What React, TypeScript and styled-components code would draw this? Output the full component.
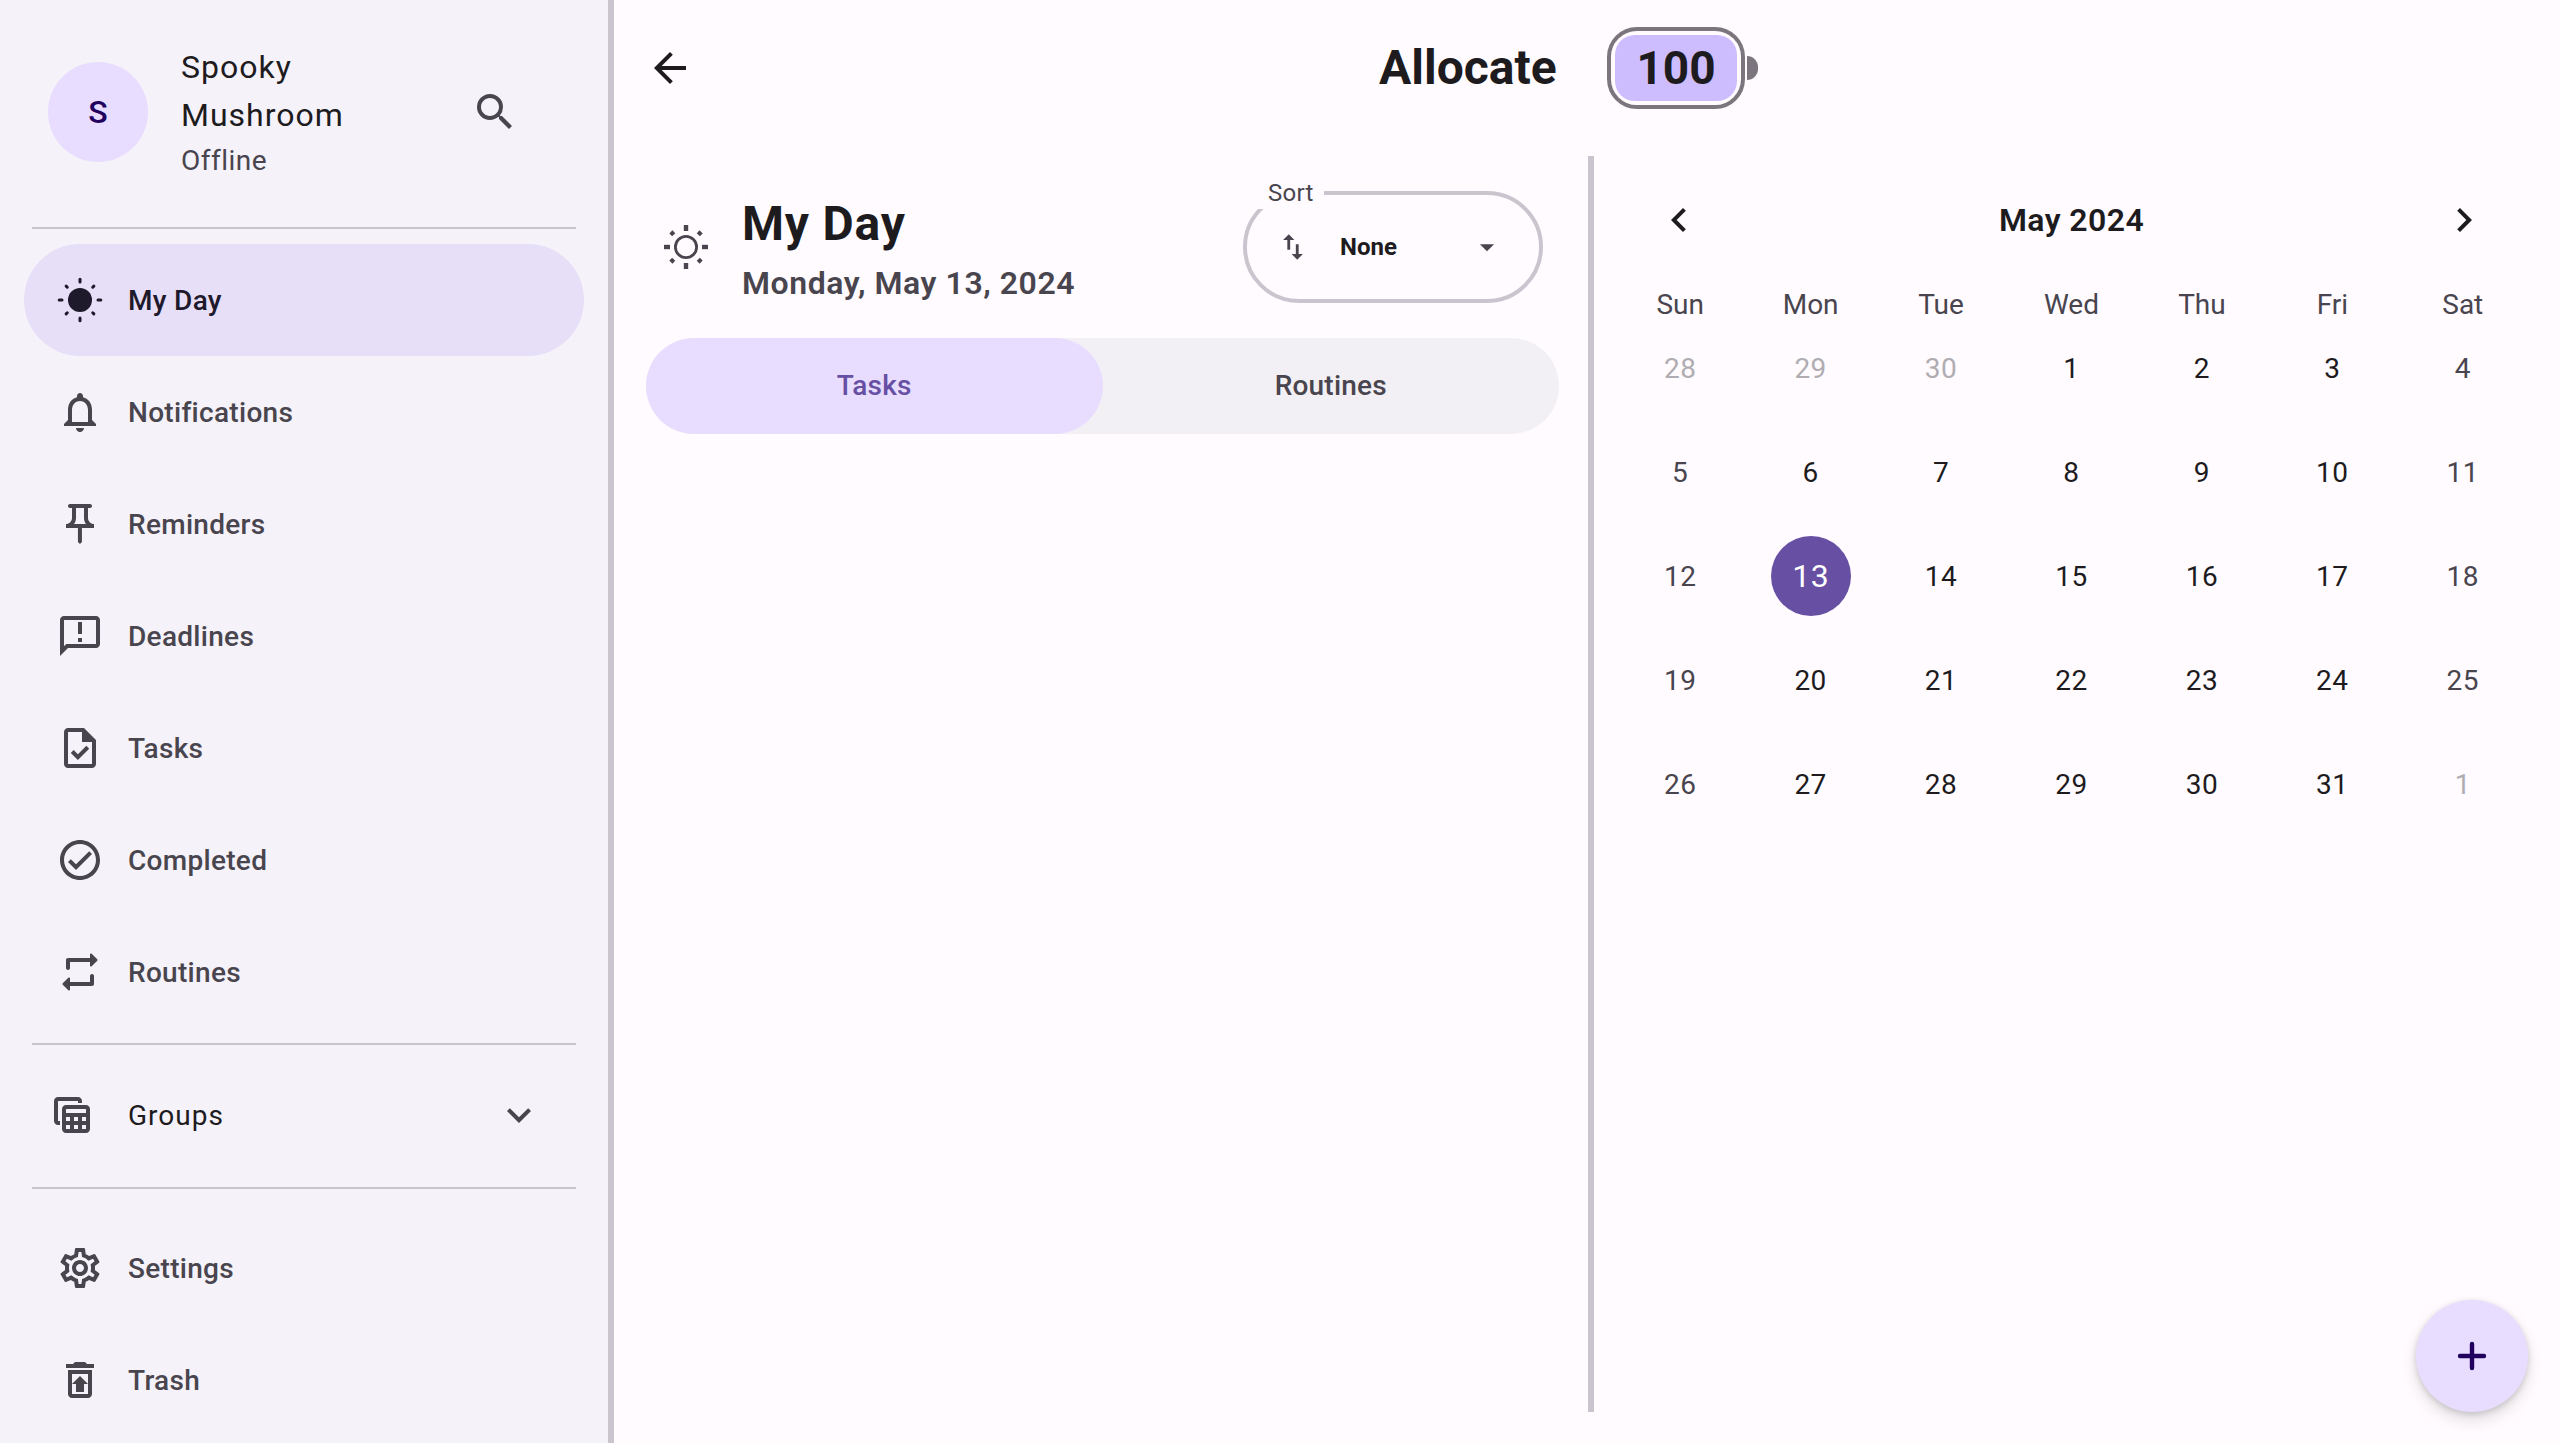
import React from 'react';
import styled, { createGlobalStyle } from 'styled-components';
import {
  MdArrowBack,
  MdArrowDropDown,
  MdChevronLeft,
  MdChevronRight,
  MdExpandMore,
  MdOutlineAnnouncement,
  MdOutlineCheckCircle,
  MdOutlineNotifications,
  MdOutlinePushPin,
  MdOutlineRestoreFromTrash,
  MdOutlineSettings,
  MdOutlineTableView,
  MdOutlineTask,
  MdSearch,
  MdSwapVert,
} from 'react-icons/md';

const colors = {
  surface: '#fffbff',
  drawer: '#f5f2f9',
  outline: '#cac4cf',
  text: '#1d1b1e',
  muted: '#49454e',
  primary: '#674fa3',
  container: '#e8ddff',
  onContainer: '#22005d',
  selected: '#e7def8',
  onSelected: '#1e192b',
};

const GlobalStyle = createGlobalStyle`
  html, body {
    margin: 0;
    padding: 0;
    background: ${colors.surface};
  }
  * {
    box-sizing: border-box;
  }
  body {
    font-family: Roboto, "Liberation Sans", sans-serif;
    color: ${colors.text};
  }
`;

const Screen = styled.div`
  position: relative;
  display: flex;
  width: 2560px;
  height: 1443px;
  overflow: hidden;
`;

const Sidebar = styled.aside`
  flex: none;
  width: 614px;
  height: 100%;
  background: ${colors.drawer};
  border-right: 6px solid ${colors.outline};
`;

const Profile = styled.div`
  display: flex;
  align-items: center;
  height: 227px;
  padding: 0 0 3px 48px;
`;

const Avatar = styled.div`
  display: flex;
  align-items: center;
  justify-content: center;
  flex: none;
  width: 100px;
  height: 100px;
  border-radius: 50%;
  background: ${colors.container};
  color: ${colors.onContainer};
  font-size: 32px;
  font-weight: 500;
`;

const ProfileText = styled.div`
  width: 290px;
  margin-left: 33px;
`;

const ProfileName = styled.div`
  width: 200px;
  font-size: 32px;
  line-height: 48px;
  letter-spacing: 1px;
`;

const ProfileStatus = styled.div`
  color: ${colors.muted};
  font-size: 28px;
  line-height: 43px;
  letter-spacing: 0.5px;
`;

const SearchButton = styled.div`
  display: flex;
  color: ${colors.muted};
  font-size: 48px;
`;

const Divider = styled.div`
  width: 544px;
  height: 2px;
  margin-left: 32px;
  background: ${colors.outline};
`;

const NavList = styled.nav<{ $top: number; $bottom: number }>`
  margin: ${({ $top, $bottom }) => `${$top}px 0 ${$bottom}px 24px`};
  width: 560px;
`;

const NavRow = styled.div<{ $active?: boolean }>`
  display: flex;
  align-items: center;
  gap: 24px;
  height: 112px;
  padding-left: 32px;
  border-radius: 56px;
  background: ${({ $active }) => ($active ? colors.selected : 'transparent')};
  color: ${({ $active }) => ($active ? colors.onSelected : colors.muted)};
  font-size: 28px;
  font-weight: 500;
  letter-spacing: 0.3px;
  svg {
    flex: none;
    width: 48px;
    height: 48px;
  }
`;

const GroupsRow = styled.div`
  display: flex;
  align-items: center;
  height: 112px;
  padding: 0 41px 0 24px;
  color: ${colors.text};
  font-size: 28px;
  letter-spacing: 1px;
  svg {
    flex: none;
    font-size: 48px;
    color: ${colors.muted};
  }
`;

const GroupsLabel = styled.span`
  flex: 1;
  margin-left: 32px;
`;

const Main = styled.main`
  flex: 1;
  display: flex;
  flex-direction: column;
  min-width: 0;
  background: ${colors.surface};
`;

const TopBar = styled.header`
  display: flex;
  align-items: center;
  height: 136px;
  margin-bottom: 20px;
  padding-left: 32px;
  svg {
    flex: none;
    font-size: 48px;
  }
`;

const AppTitle = styled.h1`
  margin: 0 0 0 685px;
  width: 228px;
  padding-bottom: 2px;
  font-size: 48px;
  font-weight: 700;
`;

const Battery = styled.div`
  display: flex;
  align-items: center;
  justify-content: center;
  width: 138px;
  height: 82px;
  padding: 4px;
  border: 4px solid #7c757e;
  border-radius: 30px;
`;

const BatteryLevel = styled.div`
  display: flex;
  align-items: center;
  justify-content: center;
  width: 100%;
  height: 100%;
  border-radius: 20px;
  background: #cdbdff;
  font-size: 46px;
  font-weight: 700;
`;

const BatteryCap = styled.div`
  width: 11px;
  height: 24px;
  margin-left: 2px;
  border-radius: 0 12px 12px 0;
  background: #7c757e;
`;

const Body = styled.div`
  display: flex;
  height: 1256px;
`;

const DayPane = styled.section`
  flex: none;
  width: 980px;
  padding: 35px 29px 0 32px;
  border-right: 6px solid ${colors.outline};
`;

const DayHeader = styled.div`
  display: flex;
  height: 112px;
`;

const DayIcon = styled.div`
  display: flex;
  align-items: center;
  width: 96px;
  padding-left: 16px;
  color: ${colors.muted};
`;

const DayTitle = styled.h2`
  margin: 1px 0 0;
  font-size: 48px;
  font-weight: 700;
  line-height: 64px;
  letter-spacing: 0.8px;
`;

const DayDate = styled.div`
  margin-top: 6px;
  color: ${colors.muted};
  font-size: 32px;
  font-weight: 600;
  line-height: 42px;
  letter-spacing: 0.55px;
`;

const SortBox = styled.div`
  position: relative;
  display: flex;
  align-items: center;
  width: 300px;
  height: 112px;
  margin: 0 16px 0 auto;
  padding-left: 29px;
  border: 4px solid ${colors.outline};
  border-radius: 56px;
`;

const SortLabel = styled.span`
  position: absolute;
  top: -20px;
  left: 11px;
  height: 34px;
  padding: 0 10px;
  background: ${colors.surface};
  color: ${colors.muted};
  font-size: 24px;
  line-height: 36px;
  letter-spacing: 0.3px;
`;

const SortIcon = styled.div`
  display: flex;
  color: ${colors.muted};
  font-size: 34px;
`;

const SortValue = styled.span`
  width: 130px;
  margin-left: 30px;
  font-size: 24px;
  font-weight: 700;
`;

const TabBar = styled.div`
  display: flex;
  height: 96px;
  margin-top: 35px;
  border-radius: 48px;
  background: #f3f0f5;
`;

const Tab = styled.div<{ $active?: boolean }>`
  flex: 1;
  display: flex;
  align-items: center;
  justify-content: center;
  padding-bottom: 2px;
  border-radius: 48px;
  background: ${({ $active }) => ($active ? colors.container : 'transparent')};
  color: ${({ $active }) => ($active ? colors.primary : colors.muted)};
  font-size: 28px;
  font-weight: 500;
  letter-spacing: 0.2px;
`;

const CalendarPane = styled.section`
  flex: 1;
  padding: 0 32px 0 21px;
`;

const MonthBar = styled.div`
  display: flex;
  align-items: center;
  justify-content: space-between;
  height: 128px;
  padding: 0 40px;
  svg {
    font-size: 48px;
  }
`;

const MonthLabel = styled.div`
  font-size: 32px;
  font-weight: 600;
  letter-spacing: 0.4px;
`;

const WeekdayRow = styled.div`
  display: grid;
  grid-template-columns: repeat(7, 1fr);
  height: 40px;
  margin-bottom: 4px;
`;

const Weekday = styled.div`
  display: flex;
  align-items: center;
  justify-content: center;
  color: ${colors.muted};
  font-size: 28px;
`;

const DayGrid = styled.div`
  display: grid;
  grid-template-columns: repeat(7, 1fr);
  grid-auto-rows: 80px;
  row-gap: 24px;
`;

const DayCell = styled.div`
  display: flex;
  align-items: center;
  justify-content: center;
`;

type DayTone = 'outside' | 'weekend' | 'normal' | 'today';

const toneColors: Record<DayTone, string> = {
  outside: '#b0adb2',
  weekend: colors.muted,
  normal: colors.text,
  today: '#ffffff',
};

const DayNumber = styled.div<{ $tone: DayTone }>`
  display: flex;
  align-items: center;
  justify-content: center;
  width: 80px;
  height: 80px;
  border-radius: 50%;
  background: ${({ $tone }) => ($tone === 'today' ? colors.primary : 'transparent')};
  color: ${({ $tone }) => toneColors[$tone]};
  font-size: ${({ $tone }) => ($tone === 'today' ? 32 : 28)}px;
  letter-spacing: 0.5px;
`;

const Fab = styled.div`
  position: absolute;
  right: 32px;
  bottom: 31px;
  display: flex;
  align-items: center;
  justify-content: center;
  width: 112px;
  height: 112px;
  border-radius: 50%;
  background: ${colors.container};
  color: ${colors.onContainer};
  box-shadow: 0 2px 6px rgba(0, 0, 0, 0.15), 0 8px 16px rgba(0, 0, 0, 0.12);
`;

const rayAngles = [0, 45, 90, 135, 180, 225, 270, 315];

// my day icon when selected: solid disc with round dots
const SunFilledIcon = () => (
  <svg viewBox="0 0 24 24" fill="currentColor">
    <circle cx="12" cy="12" r="6" />
    {rayAngles.map((angle) => (
      <line
        key={angle}
        x1="12"
        y1={angle % 90 === 0 ? 1.6 : 2.2}
        x2="12"
        y2="3"
        stroke="currentColor"
        strokeWidth="1.5"
        strokeLinecap="round"
        transform={`rotate(${angle} 12 12)`}
      />
    ))}
  </svg>
);

const SunOutlineIcon = () => (
  <svg viewBox="0 0 24 24" width="48" height="48" fill="none" stroke="currentColor">
    <circle cx="12" cy="12" r="5.3" strokeWidth="1.4" />
    {rayAngles.map((angle) => (
      <line
        key={angle}
        x1="12"
        y1={angle % 90 === 0 ? 1 : 1.3}
        x2="12"
        y2={angle % 90 === 0 ? 4 : 3.3}
        strokeWidth="2.2"
        transform={`rotate(${angle} 12 12)`}
      />
    ))}
  </svg>
);

const RepeatIcon = () => (
  <svg viewBox="0 0 24 24" fill="currentColor">
    <path d="M7 7h10v1.79c0 .45.54.67.85.35l2.79-2.79c.2-.2.2-.51 0-.71l-2.79-2.79c-.31-.31-.85-.09-.85.36V5H6c-.55 0-1 .45-1 1v4c0 .55.45 1 1 1s1-.45 1-1V7zm10 10H7v-1.79c0-.45-.54-.67-.85-.35l-2.79 2.79c-.2.2-.2.51 0 .71l2.79 2.79c.31.31.85.09.85-.36V19h11c.55 0 1-.45 1-1v-4c0-.55-.45-1-1-1s-1 .45-1 1v3z" />
  </svg>
);

const PlusIcon = () => (
  <svg viewBox="0 0 24 24" width="48" height="48" stroke="currentColor" strokeWidth="2.2" strokeLinecap="round">
    <line x1="12" y1="6" x2="12" y2="18" />
    <line x1="6" y1="12" x2="18" y2="12" />
  </svg>
);

const navItems = [
  { label: 'My Day', icon: <SunFilledIcon />, active: true },
  { label: 'Notifications', icon: <MdOutlineNotifications /> },
  { label: 'Reminders', icon: <MdOutlinePushPin /> },
  { label: 'Deadlines', icon: <MdOutlineAnnouncement /> },
  { label: 'Tasks', icon: <MdOutlineTask /> },
  { label: 'Completed', icon: <MdOutlineCheckCircle /> },
  { label: 'Routines', icon: <RepeatIcon /> },
];

const footerItems = [
  { label: 'Settings', icon: <MdOutlineSettings /> },
  { label: 'Trash', icon: <MdOutlineRestoreFromTrash /> },
];

const weekdays = ['Sun', 'Mon', 'Tue', 'Wed', 'Thu', 'Fri', 'Sat'];

// 28, 29, 30 of April, all of May, then 1 June
const calendarDays = [28, 29, 30, ...Array.from({ length: 31 }, (_, i) => i + 1), 1];

const getTone = (day: number, index: number): DayTone => {
  if (index < 3 || index > 33) return 'outside';
  if (day === 13) return 'today';
  return index % 7 === 0 || index % 7 === 6 ? 'weekend' : 'normal';
};

const App: React.FC = () => {
  return (
    <Screen>
      <GlobalStyle />
      <Sidebar>
        <Profile>
          <Avatar>S</Avatar>
          <ProfileText>
            <ProfileName>Spooky Mushroom</ProfileName>
            <ProfileStatus>Offline</ProfileStatus>
          </ProfileText>
          <SearchButton>
            <MdSearch />
          </SearchButton>
        </Profile>
        <Divider />
        <NavList $top={15} $bottom={15}>
          {navItems.map((item) => (
            <NavRow key={item.label} $active={item.active}>
              {item.icon}
              {item.label}
            </NavRow>
          ))}
        </NavList>
        <Divider />
        <NavList $top={14} $bottom={16}>
          <GroupsRow>
            <MdOutlineTableView />
            <GroupsLabel>Groups</GroupsLabel>
            <MdExpandMore />
          </GroupsRow>
        </NavList>
        <Divider />
        <NavList $top={23} $bottom={0}>
          {footerItems.map((item) => (
            <NavRow key={item.label}>
              {item.icon}
              {item.label}
            </NavRow>
          ))}
        </NavList>
      </Sidebar>
      <Main>
        <TopBar>
          <MdArrowBack />
          <AppTitle>Allocate</AppTitle>
          <Battery>
            <BatteryLevel>100</BatteryLevel>
          </Battery>
          <BatteryCap />
        </TopBar>
        <Body>
          <DayPane>
            <DayHeader>
              <DayIcon>
                <SunOutlineIcon />
              </DayIcon>
              <div>
                <DayTitle>My Day</DayTitle>
                <DayDate>Monday, May 13, 2024</DayDate>
              </div>
              <SortBox>
                <SortLabel>Sort</SortLabel>
                <SortIcon>
                  <MdSwapVert />
                </SortIcon>
                <SortValue>None</SortValue>
                <SortIcon>
                  <MdArrowDropDown />
                </SortIcon>
              </SortBox>
            </DayHeader>
            <TabBar>
              <Tab $active>Tasks</Tab>
              <Tab>Routines</Tab>
            </TabBar>
          </DayPane>
          <CalendarPane>
            <MonthBar>
              <MdChevronLeft />
              <MonthLabel>May 2024</MonthLabel>
              <MdChevronRight />
            </MonthBar>
            <WeekdayRow>
              {weekdays.map((name) => (
                <Weekday key={name}>{name}</Weekday>
              ))}
            </WeekdayRow>
            <DayGrid>
              {calendarDays.map((day, index) => (
                <DayCell key={index}>
                  <DayNumber $tone={getTone(day, index)}>{day}</DayNumber>
                </DayCell>
              ))}
            </DayGrid>
          </CalendarPane>
        </Body>
      </Main>
      <Fab>
        <PlusIcon />
      </Fab>
    </Screen>
  );
};

export default App;
